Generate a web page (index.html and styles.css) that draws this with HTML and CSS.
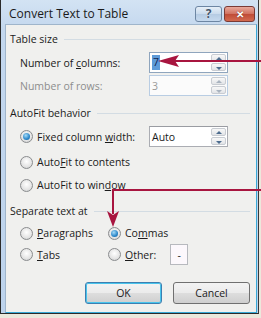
FILE: index.html
```html
<!DOCTYPE html>
<html lang="en">
<head>
    <meta charset="UTF-8">
    <title>Convert Text to Table</title>
    <link rel="stylesheet" href="styles.css">
</head>
<body>

<div class="dialog">
    <div class="titlebar">
        <span class="title">Convert Text to Table</span>
        <span class="tbtn help">?</span>
        <span class="tbtn close">&#x2715;</span>
    </div>

    <div class="client">
        <div class="group first">Table size</div>
        <div class="row r-cols">
            <span class="lbl">Number of <u>c</u>olumns:</span>
            <div class="spin focus"><span class="val"><span class="sel">7</span></span><span class="arrows"><i class="up"></i><i class="dn"></i></span></div>
        </div>
        <div class="row r-rows">
            <span class="lbl dim">Number of rows:</span>
            <div class="spin off"><span class="val">3</span><span class="arrows"><i class="up"></i><i class="dn"></i></span></div>
        </div>

        <div class="group g2">AutoFit behavior</div>
        <div class="row r-fixed">
            <span class="lbl opt"><span class="radio on"></span><span>Fixed column <u>w</u>idth:</span></span>
            <div class="spin"><span class="val">Auto</span><span class="arrows"><i class="up"></i><i class="dn"></i></span></div>
        </div>
        <div class="row r-short r-contents">
            <span class="opt"><span class="radio"></span><span>Auto<u>F</u>it to contents</span></span>
        </div>
        <div class="row r-short r-window">
            <span class="opt"><span class="radio"></span><span>AutoFit to win<u>d</u>ow</span></span>
        </div>

        <div class="group g3">Separate text at</div>
        <div class="row r-short r-sep1">
            <span class="opt col1"><span class="radio"></span><span><u>P</u>aragraphs</span></span>
            <span class="opt"><span class="radio on"></span><span>Co<u>m</u>mas</span></span>
        </div>
        <div class="row r-sep2">
            <span class="opt col1"><span class="radio"></span><span><u>T</u>abs</span></span>
            <span class="opt"><span class="radio"></span><span><u>O</u>ther:</span></span>
            <span class="other">-</span>
        </div>

        <div class="buttons">
            <button class="btn default">OK</button>
            <button class="btn">Cancel</button>
        </div>
    </div>
</div>

<!-- callout arrows drawn over the dialog -->
<svg class="callouts" width="261" height="318" viewBox="0 0 261 318">
    <line x1="261" y1="61" x2="172" y2="61" stroke="#a8153f" stroke-width="2"/>
    <polygon points="158,61 179,55 175,61 179,67" fill="#a8153f"/>
    <polyline points="261,190 113,190 113,214" fill="none" stroke="#a8153f" stroke-width="2"/>
    <polygon points="113,227 107,211 113,215 119,211" fill="#a8153f"/>
</svg>

</body>
</html>
```

FILE: styles.css
```css
body {
    margin: 0;
    width: 261px;
    height: 318px;
    background-color: #ece8dc;
    font-family: "Open Sans", "Liberation Sans", sans-serif;
    font-size: 10.5px;
    color: #1b1b1b;
    position: relative;
    overflow: hidden;
}
.dialog {
    width: 259px;
    box-sizing: border-box;
    border-left: 1px solid #2b2b2b;
    border-right: 1px solid #3a3a3a;
    border-bottom: 1px solid #2b2b2b;
    background: linear-gradient(#d3e3f3, #c3d7ee 30px, #bdd3ec);
}
.titlebar {
    height: 24px;
    display: flex;
    align-items: center;
    padding-left: 8px;
}
.title {
    font-size: 12px;
    color: #1a1a1a;
    flex: 1;
    padding-top: 2px;
}
.tbtn {
    height: 14px;
    border: 1px solid #6d86a3;
    border-radius: 3px;
    margin-top: 3px;
    display: flex;
    align-items: center;
    justify-content: center;
    font-weight: bold;
    color: #fff;
}
.help {
    width: 25px;
    background: linear-gradient(#e6eff8, #c9daec 50%, #b5cbe3 51%, #c6d9ee);
    color: #41546a;
    font-size: 12px;
    text-shadow: 0 0 1px #fff;
}
.close {
    width: 29px;
    margin-left: 2px;
    margin-right: 3px;
    border-color: #7a3a35;
    background: linear-gradient(#e9a99c, #d0705e 50%, #bf4b36 51%, #d36a4f);
    font-size: 10px;
    text-shadow: 0 0 1px #5a1a10;
}

.client {
    margin-left: 4px;
    width: 252px;
    box-sizing: border-box;
    background-color: #f0f0ee;
    border: 1px solid #9fb5cb;
    border-right-color: #3aa9d6;
    border-bottom-color: #3aa9d6;
    padding: 6px 6px 8px 0;
}

.group {
    height: 16px;
    display: flex;
    align-items: center;
    padding-left: 4px;
}
.group::after {
    content: "";
    flex: 1;
    margin-left: 6px;
    border-top: 1px solid #d3dce3;
}
.g2 { margin-top: 9px; }
.g3 { margin-top: 8px; }

.row {
    display: flex;
    align-items: center;
    height: 21px;
    padding-left: 14px;
}
.r-short { height: 20px; }
.r-cols { margin-top: 5px; }
.r-rows { margin-top: 2px; }
.r-fixed { margin-top: 5px; }
.r-contents { margin-top: 5px; }
.r-window { margin-top: 3px; }
.r-sep1 { margin-top: 4px; }
.r-sep2 { margin-top: 1px; }

.lbl {
    width: 129px;
    flex: none;
}
.dim { color: #8d8d8d; }
.opt {
    display: flex;
    align-items: center;
}
.col1 { width: 88px; }

.radio {
    width: 11px;
    height: 11px;
    border: 1px solid #8a8c8e;
    border-radius: 50%;
    background: radial-gradient(circle at 50% 40%, #ffffff, #e4e4e4 60%, #c9cbcd);
    margin-right: 4px;
    flex: none;
    position: relative;
}
.radio.on::after {
    content: "";
    position: absolute;
    left: 2px;
    top: 2px;
    width: 7px;
    height: 7px;
    border-radius: 50%;
    background: radial-gradient(circle at 40% 35%, #a6dcf8, #2a86c9 60%, #165b92);
}

.spin {
    width: 79px;
    height: 21px;
    box-sizing: border-box;
    border: 1px solid #abadb3;
    border-top-color: #9a9ca2;
    background: #fff;
    display: flex;
}
.spin.focus { border-color: #8fa5bd; }
.spin.off {
    border-color: #b9cde3;
    background: #fbfbfb;
    color: #9a9a9a;
}
.val {
    flex: 1;
    display: flex;
    align-items: center;
    padding-left: 2px;
}
.sel {
    background: #5d9ad8;
    color: #0f2350;
    padding: 0 1px;
    line-height: 15px;
}
.arrows {
    width: 15px;
    margin: 1px;
    display: flex;
    flex-direction: column;
    gap: 1px;
}
.arrows i {
    flex: 1;
    border: 1px solid #c8ccd2;
    border-radius: 2px;
    background: linear-gradient(#f8f8f8, #e2e4e7);
    position: relative;
}
.arrows i::after {
    content: "";
    position: absolute;
    left: 4px;
    border-left: 3px solid transparent;
    border-right: 3px solid transparent;
}
.arrows .up::after {
    top: 2px;
    border-bottom: 3px solid #4d6c8e;
}
.arrows .dn::after {
    top: 3px;
    border-top: 3px solid #4d6c8e;
}
.off .arrows i::after { border-bottom-color: #a9b3bf; border-top-color: #a9b3bf; }
.off .arrows .up::after { border-top-color: transparent; }
.off .arrows .dn::after { border-bottom-color: transparent; }

.other {
    width: 18px;
    height: 21px;
    box-sizing: border-box;
    margin-left: 14px;
    border: 1px solid #b7b9be;
    background: #fcf8fc;
    display: flex;
    align-items: center;
    justify-content: center;
}

.buttons {
    margin-top: 17px;
    display: flex;
    justify-content: flex-end;
    gap: 11px;
}
.btn {
    width: 77px;
    height: 22px;
    font-family: inherit;
    font-size: 10.5px;
    color: #1b1b1b;
    border: 1px solid #707070;
    border-radius: 3px;
    background: linear-gradient(#f3f3f3, #ebebeb 50%, #dddddd 51%, #cfcfcf);
    padding: 0;
}
.btn.default {
    border-color: #3c7fb1;
    box-shadow: inset 0 0 0 1px #48c4ec;
}

.callouts {
    position: absolute;
    left: 0;
    top: 0;
}
```
